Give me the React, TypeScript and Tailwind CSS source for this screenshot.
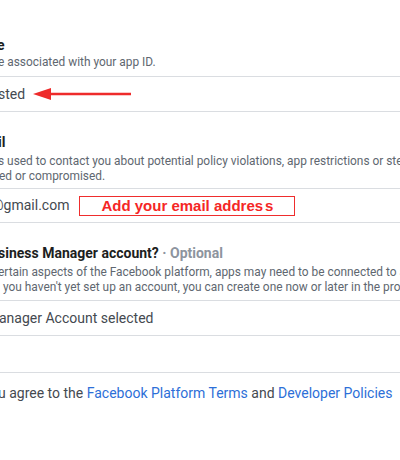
import React from 'react';

// Cropped view of the "Create an app" details form; the left side of every line is cut by the frame.
const Clip: React.FC<{ className?: string; children: React.ReactNode }> = ({ className = '', children }) => (
  <div className={`overflow-hidden whitespace-nowrap ${className}`}>{children}</div>
);

const Divider = () => <div className="h-px bg-[#dadde1] w-full" />;

const Arrow = () => (
  <svg width="100" height="14" viewBox="0 0 100 14" className="ml-[8px] shrink-0">
    <line x1="16" y1="7" x2="98" y2="7" stroke="#ee2b2b" strokeWidth="2.5" />
    <polygon points="0,7 18,1 18,13" fill="#ee2b2b" />
  </svg>
);

export default function App() {
  return (
    <div className="w-[400px] h-[460px] overflow-hidden bg-white font-['Roboto','Liberation_Sans',sans-serif]">
      {/* Display name */}
      <div className="pt-[36px]">
        <Clip className="text-[14px] leading-[18px] font-bold text-[#1c1e21]">
          <span className="inline-block -ml-[3px]">e</span>
        </Clip>
        <Clip className="mt-px text-[11.9px] leading-[15px] text-[#606770]">
          <span className="inline-block -ml-[2px]">e associated with your app ID.</span>
        </Clip>
      </div>
      <div className="mt-[6px]">
        <Divider />
      </div>
      <div className="h-[34px] flex items-center overflow-hidden">
        <span className="inline-block -ml-[2px] text-[14px] text-[#444950] whitespace-nowrap">sted</span>
        <Arrow />
      </div>
      <Divider />

      {/* Contact email */}
      <div className="pt-[21px]">
        <Clip className="text-[14px] leading-[18px] font-bold text-[#1c1e21]">
          <span className="inline-block -ml-[2px]">il</span>
        </Clip>
        <div className="mt-[3px] text-[11.9px] leading-[15px] text-[#606770]">
          <Clip>
            <span className="inline-block -ml-[2px]">
              s used to contact you about potential policy violations, app restrictions or steps to recover the app if it's been
            </span>
          </Clip>
          <Clip>
            <span className="inline-block -ml-[1px]">ed or compromised.</span>
          </Clip>
        </div>
      </div>
      <div className="mt-[4px]">
        <Divider />
      </div>
      <div className="h-[33px] flex items-center overflow-hidden">
        <span className="inline-block -ml-[9px] text-[14px] text-[#444950] whitespace-nowrap">@gmail.com</span>
        <div className="ml-[10px] w-[216px] h-[20px] border border-[#ef2d2d] flex items-center justify-center shrink-0">
          <span className="font-['Liberation_Sans',sans-serif] font-bold text-[15px] leading-none text-[#f52626] whitespace-nowrap">
            Add your email addres<span className="ml-[2px]">s</span>
          </span>
        </div>
      </div>
      <Divider />

      {/* Business manager */}
      <div className="pt-[21px]">
        <Clip className="text-[14px] leading-[18px] font-bold text-[#1c1e21]">
          <span className="inline-block -ml-[2px]">
            siness Manager account? <span className="text-[#8d949e]">· Optional</span>
          </span>
        </Clip>
        <div className="mt-[3px] text-[11.9px] leading-[15px] text-[#606770]">
          <Clip>
            <span className="inline-block -ml-[2px]">
              ertain aspects of the Facebook platform, apps may need to be connected to a Business Manager account.
            </span>
          </Clip>
          <Clip>
            <span className="inline-block ml-[3px]">
              you haven't yet set up an account, you can create one now or later in the process.
            </span>
          </Clip>
        </div>
      </div>
      <div className="mt-[5px]">
        <Divider />
      </div>
      <div className="h-[34px] flex items-center overflow-hidden">
        <span className="inline-block -ml-[1px] text-[14px] text-[#444950] whitespace-nowrap">anager Account selected</span>
      </div>
      <Divider />

      <div className="h-[36px]" />
      <Divider />

      {/* Terms */}
      <Clip className="pt-[10px] text-[14px] leading-[20px] text-[#444950]">
        <span className="inline-block -ml-[2px]">
          u agree to the <span className="text-[#2d6fd8]">Facebook Platform Terms</span> and{' '}
          <span className="text-[#2d6fd8]">Developer Policies</span>
        </span>
      </Clip>
    </div>
  );
}
